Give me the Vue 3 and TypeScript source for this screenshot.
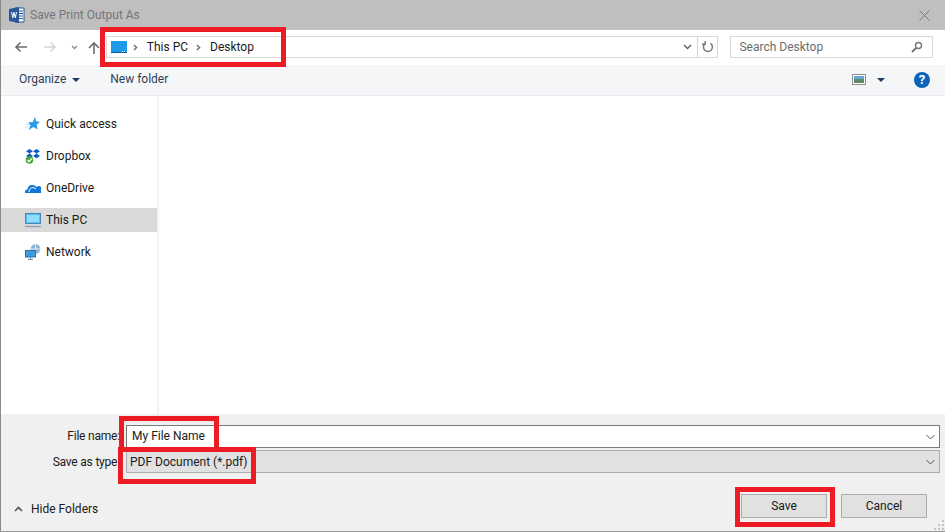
<script setup lang="ts">
const places = [
  { name: 'Quick access', icon: 'star' },
  { name: 'Dropbox', icon: 'dropbox' },
  { name: 'OneDrive', icon: 'cloud' },
  { name: 'This PC', icon: 'pc' },
  { name: 'Network', icon: 'network' },
]
</script>

<template>
  <div class="dialog">
    <header class="titlebar">
      <svg class="word" width="16" height="16" viewBox="0 0 16 16">
        <path d="M6 1h9v14H6z" fill="#fff" stroke="#2b579a" />
        <path d="M9 4h5M9 6.500h5M9 9h5M9 11.500h5" stroke="#2b579a" />
        <path d="M0 2l10-2v16L0 14z" fill="#2b579a" />
        <path d="M2 5l1.300 6h1L5 7.500 5.800 11h1L8 5H7L6.300 8.800 5.500 5h-1L3.700 8.800 3 5z" fill="#fff" />
      </svg>
      <span class="title">Save Print Output As</span>
      <svg class="close" width="11" height="11" viewBox="0 0 11 11">
        <path d="M.5.500l10 10M10.500.500l-10 10" stroke="#7c7c7c" fill="none" />
      </svg>
    </header>

    <nav class="navbar">
      <div class="arrows">
        <svg class="back" width="13" height="12" viewBox="0 0 13 12"><path d="M13 6H2M6.500 1.500L2 6l4.500 4.500" stroke="#6d6d6d" stroke-width="1.600" fill="none" /></svg>
        <svg class="forward" width="13" height="12" viewBox="0 0 13 12"><path d="M0 6h11M6.500 1.500L11 6l-4.500 4.500" stroke="#d5d5d5" stroke-width="1.600" fill="none" /></svg>
        <svg class="recent" width="7" height="5" viewBox="0 0 7 5"><path d="M1 1l2.500 2.500L6 1" stroke="#8a8a8a" stroke-width="1.300" fill="none" /></svg>
        <svg class="up" width="12" height="13" viewBox="0 0 12 13"><path d="M6 13V2M1 7l5-5 5 5" stroke="#6d6d6d" stroke-width="1.600" fill="none" /></svg>
      </div>
      <div class="address">
        <svg class="screen" width="16" height="12" viewBox="0 0 16 12">
          <rect width="16" height="12" fill="#1e9be8" />
          <rect x="0" y="11" width="16" height="1" fill="#0b5fa5" />
          <path d="M13 10.500h1M11 10.500h1" stroke="#fff" />
        </svg>
        <svg class="chev" width="5" height="7" viewBox="0 0 5 7"><path d="M1 1l2.500 2.500L1 6" stroke="#777" stroke-width="1.600" fill="none" /></svg>
        <span class="crumb">This PC</span>
        <svg class="chev" width="5" height="7" viewBox="0 0 5 7"><path d="M1 1l2.500 2.500L1 6" stroke="#777" stroke-width="1.600" fill="none" /></svg>
        <span class="crumb">Desktop</span>
        <svg class="addr-down" width="9" height="6" viewBox="0 0 9 6"><path d="M1 1l3.500 3.500L8 1" stroke="#666" stroke-width="1.500" fill="none" /></svg>
        <div class="refresh">
          <svg width="12" height="12" viewBox="0 0 12 12"><path d="M3 2.600A4.500 4.500 0 1 0 8.500 2.300M3.200 0v3.200H0" stroke="#7a7a7a" stroke-width="1.500" fill="none" /></svg>
        </div>
      </div>
      <div class="search">
        <span>Search Desktop</span>
        <svg width="12" height="12" viewBox="0 0 12 12"><circle cx="7.500" cy="4.500" r="3" stroke="#777" stroke-width="1.400" fill="none" /><path d="M5 7l-4 4" stroke="#777" stroke-width="2" /></svg>
      </div>
    </nav>

    <div class="toolbar">
      <span class="organize">Organize</span>
      <i class="caret"></i>
      <span class="newfolder">New folder</span>
      <svg class="view" width="14" height="12" viewBox="0 0 14 12">
        <rect x=".5" y=".5" width="13" height="10" fill="#fff" stroke="#8c8c8c" />
        <rect x="2" y="2" width="10" height="3" fill="#6aa6d8" />
        <rect x="2" y="5" width="10" height="4" fill="#5c8a68" />
      </svg>
      <i class="caret view-caret"></i>
      <span class="help">?</span>
    </div>

    <main class="body">
      <aside class="sidebar">
        <div v-for="p in places" :key="p.name" class="place" :class="{ active: p.name === 'This PC' }">
          <svg width="16" height="16" viewBox="0 0 16 16">
            <template v-if="p.icon === 'star'">
              <path d="M10 1l1.200 4.200L15 6l-3.300 2.500.8 5L8.500 11 3.800 14l1.700-5L3 6.500l4.800-.6z" fill="#2b9be8" />
              <path d="M1 8.500h3M0 11h3" stroke="#bcdcf5" />
            </template>
            <template v-else-if="p.icon === 'dropbox'">
              <path d="M4.500 1L8 3.300 4.500 5.600 1 3.300zM11.500 1L15 3.300l-3.500 2.300L8 3.300zM4.500 5.600L8 7.900l-3.500 2.300L1 7.900zM11.500 5.600L15 7.900l-3.500 2.300L8 7.900z" fill="#0a5fc4" />
              <circle cx="4.500" cy="12" r="3.800" fill="#4aa63a" />
              <path d="M2.500 12l1.500 1.500L7 10.500" stroke="#fff" stroke-width="1.300" fill="none" />
            </template>
            <template v-else-if="p.icon === 'cloud'">
              <path d="M0 13a3 3 0 0 1 2.500-3.800A5 5 0 0 1 11.500 7a3.500 3.500 0 0 1 4.500 6z" fill="#0f78d4" />
              <path d="M4 12a4 4 0 0 1 7-3" stroke="#fff" stroke-width="1" fill="none" />
            </template>
            <template v-else-if="p.icon === 'pc'">
              <rect x=".5" y="1.500" width="15" height="10" fill="#54c0f5" stroke="#4a87b5" />
              <rect x="2" y="3" width="12" height="7" fill="#8fdcfb" />
              <path d="M0 14.500h16" stroke="#8aa4bb" stroke-width="1.400" />
            </template>
            <template v-else>
              <circle cx="10.500" cy="5" r="4.800" fill="#8cb4d8" />
              <path d="M10.500 .5v9M6 5h9" stroke="#dfeaf4" />
              <rect x=".5" y="6.500" width="10" height="6.500" fill="#3c9ddc" stroke="#2f6e9f" />
              <path d="M5.500 13v2M3 15.500h5" stroke="#6c8ba5" />
            </template>
          </svg>
          <span>{{ p.name }}</span>
        </div>
      </aside>
      <section class="files"></section>
    </main>

    <footer class="footer">
      <div class="field first">
        <label>File name:</label>
        <div class="combo white">
          <span>My File Name</span>
          <svg width="9" height="6" viewBox="0 0 9 6"><path d="M.5 1l4 4 4-4" stroke="#555" fill="none" /></svg>
        </div>
      </div>
      <div class="field second">
        <label>Save as type:</label>
        <div class="combo grey">
          <span>PDF Document (*.pdf)</span>
          <svg width="9" height="6" viewBox="0 0 9 6"><path d="M.5 1l4 4 4-4" stroke="#555" fill="none" /></svg>
        </div>
      </div>
      <div class="actions">
        <div class="hide">
          <svg width="9" height="6" viewBox="0 0 9 6"><path d="M1 5l3.500-3.500L8 5" stroke="#555" stroke-width="1.600" fill="none" /></svg>
          <span>Hide Folders</span>
        </div>
        <button class="btn save">Save</button>
        <button class="btn">Cancel</button>
      </div>
      <svg class="grip" width="11" height="11" viewBox="0 0 11 11">
        <path d="M8 0h2v2H8zM4 4h2v2H4zM8 4h2v2H8zM0 8h2v2H0zM4 8h2v2H4zM8 8h2v2H8z" fill="#c4c4c4" />
      </svg>
    </footer>

    <div class="mark mark-address"></div>
    <div class="mark mark-type"></div>
    <div class="mark mark-name"></div>
    <div class="mark mark-save"></div>
  </div>
</template>

<style>
body {
  margin: 0;
  overflow: hidden;
}
</style>

<style scoped>
.dialog {
  position: relative;
  width: 945px;
  height: 532px;
  box-sizing: border-box;
  border-left: 1px solid #8a8a8a;
  border-bottom: 1px solid #9a9a9a;
  display: flex;
  flex-direction: column;
  background: #fff;
  font-family: Roboto, "Open Sans", sans-serif;
  font-size: 12px;
  color: #1a1a1a;
  overflow: hidden;
}

.titlebar {
  height: 30px;
  margin-left: -1px;
  padding: 0 15px 0 9px;
  background: #bfbfbf;
  display: flex;
  align-items: center;
  flex-shrink: 0;
}

.word {
  margin-right: 5px;
}

.title {
  color: #757575;
}

.close {
  margin-left: auto;
}

.navbar {
  height: 35px;
  box-sizing: border-box;
  display: flex;
  align-items: flex-start;
  flex-shrink: 0;
  padding: 6px 12px 0 0;
}

.arrows {
  width: 105px;
  height: 22px;
  box-sizing: border-box;
  padding-left: 13px;
  display: flex;
  align-items: center;
}

.forward {
  margin-left: 17px;
}

.recent {
  margin-left: 14px;
}

.up {
  margin-left: 10px;
}

.address {
  width: 614px;
  height: 22px;
  box-sizing: border-box;
  border: 1px solid #d9d9d9;
  display: flex;
  align-items: center;
  padding-left: 4px;
}

.screen {
  margin-right: 6px;
}

.chev {
  margin-right: 9px;
}

.crumb {
  margin-right: 8px;
}

.addr-down {
  margin-left: auto;
  margin-right: 5px;
}

.refresh {
  width: 19px;
  height: 100%;
  border-left: 1px solid #d9d9d9;
  display: flex;
  align-items: center;
  justify-content: center;
}

.search {
  width: 203px;
  height: 22px;
  box-sizing: border-box;
  margin-left: 12px;
  border: 1px solid #d9d9d9;
  display: flex;
  align-items: center;
  justify-content: space-between;
  padding: 0 9px 0 8px;
  color: #6d6d6d;
}

.toolbar {
  height: 31px;
  box-sizing: border-box;
  flex-shrink: 0;
  background: #f5f6f7;
  border-bottom: 1px solid #e9ebee;
  display: flex;
  align-items: center;
  padding-left: 18px;
  color: #2f3f5a;
}

.organize,
.newfolder {
  padding-bottom: 2px;
}

.caret {
  width: 0;
  height: 0;
  margin-left: 6px;
  border-left: 4px solid transparent;
  border-right: 4px solid transparent;
  border-top: 4px solid #1f3a62;
}

.newfolder {
  margin-left: 30px;
}

.view {
  margin-left: auto;
}

.view-caret {
  margin-left: 11px;
}

.help {
  width: 16px;
  height: 16px;
  margin-left: 29px;
  margin-right: 15px;
  border-radius: 50%;
  background: #0a63b8;
  color: #fff;
  font-weight: 700;
  font-size: 13px;
  line-height: 16px;
  text-align: center;
}

.body {
  flex: 1;
  display: flex;
  min-height: 0;
}

.sidebar {
  width: 158px;
  box-sizing: border-box;
  padding-top: 16px;
  border-right: 2px solid #f2f2f2;
  display: flex;
  flex-direction: column;
  gap: 8px;
  flex-shrink: 0;
}

.place {
  width: 156px;
  height: 24px;
  display: flex;
  align-items: center;
  gap: 5px;
  padding-left: 24px;
  box-sizing: border-box;
}

.place.active {
  background: #d9d9d9;
}

.files {
  flex: 1;
}

.footer {
  position: relative;
  height: 117px;
  flex-shrink: 0;
  box-sizing: border-box;
  background: #f0f0f0;
  padding: 11px 5px 0 0;
  display: flex;
  flex-direction: column;
}

.field {
  display: flex;
  align-items: center;
  height: 23px;
}

.field.first label,
.field.first .combo span {
  padding-bottom: 2px;
}

.field.second {
  margin-top: 2px;
}

.field label {
  width: 119px;
  flex-shrink: 0;
  text-align: right;
  white-space: nowrap;
  letter-spacing: -0.2px;
}

.combo {
  flex: 1;
  height: 23px;
  box-sizing: border-box;
  margin-left: 6px;
  display: flex;
  align-items: center;
  justify-content: space-between;
  padding: 0 4px 0 5px;
}

.combo.white {
  background: #fff;
  border: 1px solid #7a7a7a;
}

.combo.grey {
  background: #e1e1e1;
  border: 1px solid #adadad;
  padding-left: 3px;
}

.actions {
  display: flex;
  align-items: center;
  margin-top: 21px;
  padding-right: 13px;
}

.hide {
  display: flex;
  align-items: center;
  gap: 8px;
  margin-left: 13px;
  margin-right: auto;
  padding-top: 6px;
}

.btn {
  width: 86px;
  height: 24px;
  box-sizing: border-box;
  padding: 0;
  background: #e1e1e1;
  border: 1px solid #adadad;
  font: inherit;
  color: #1a1a1a;
}

.btn.save {
  margin-right: 14px;
}

.grip {
  position: absolute;
  right: 0;
  bottom: 0;
}

.mark {
  position: absolute;
  box-sizing: border-box;
  border: 5px solid #ed1c24;
}

.mark-address {
  left: 99px;
  top: 27px;
  width: 186px;
  height: 40px;
}

.mark-name {
  left: 118px;
  top: 416px;
  width: 100px;
  height: 36px;
}

.mark-type {
  left: 117px;
  top: 447px;
  width: 138px;
  height: 37px;
}

.mark-save {
  left: 734px;
  top: 487px;
  width: 100px;
  height: 40px;
}
</style>
